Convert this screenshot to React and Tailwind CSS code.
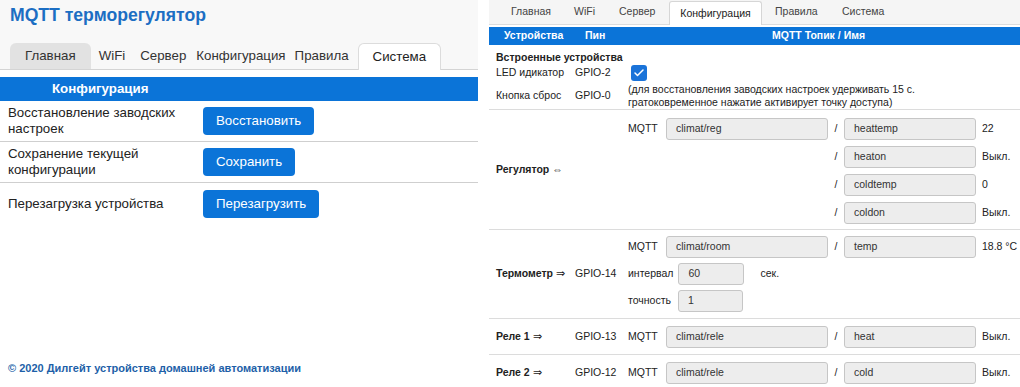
import { Check } from 'lucide-react';

const Field = ({ value, w }) => (
  <div className={`${w} h-[22px] shrink-0 bg-[#ededed] border border-[#c6c6c6] rounded-[3px] pl-[9px] flex items-center text-[#333]`}>
    {value}
  </div>
);

const TopicRow = ({ label, topic, name, value }) => (
  <div className="flex items-center h-[22px]">
    <span className="w-[38px] shrink-0">{label}</span>
    {topic ? <Field value={topic} w="w-[162px]" /> : <div className="w-[162px] shrink-0" />}
    <span className="w-[16px] shrink-0 text-center">/</span>
    <Field value={name} w="w-[132px]" />
    <span className="ml-[6px] whitespace-nowrap">{value}</span>
  </div>
);

const LeftRow = ({ label, action, last }) => (
  <div className={`flex items-center h-[41px] ${last ? '' : 'border-b border-[#cfcfcf]'}`}>
    <div className="w-[203px] pl-[8px] leading-[16px] text-[#222]">{label}</div>
    <button className="h-[28px] px-[13px] bg-[#0b74d8] text-white rounded-[4px]">{action}</button>
  </div>
);

const LeftPanel = () => (
  <div className="w-[478px] shrink-0 h-full flex flex-col text-[13.3px]">
    <div className="bg-[#f8f8f8] border-b border-[#d4d4d4]">
      <h1 className="h-[43px] pl-[10px] pt-[4px] text-[17.6px] leading-[22px] font-bold text-[#1c6ec3]">
        MQTT терморегулятор
      </h1>
      <div className="flex items-center h-[26px] pl-[10px] text-[#333]">
        <span className="h-[26px] px-[15px] flex items-center rounded-t-[6px] bg-[#e2e2e2]">Главная</span>
        <span className="ml-[8px]">WiFi</span>
        <span className="ml-[15px]">Сервер</span>
        <span className="ml-[10px]">Конфигурация</span>
        <span className="ml-[9px]">Правила</span>
        <span className="ml-[9px] h-[27px] -mb-px px-[14px] flex items-center bg-white border border-b-0 border-[#dcdcdc] rounded-t-[6px] text-[#222]">
          Система
        </span>
      </div>
    </div>
    <div className="mt-[7px] h-[24px] bg-[#0b74d8] text-white font-bold flex items-center pl-[52px]">
      Конфигурация
    </div>
    <LeftRow label={<>Восстановление заводских<br />настроек</>} action="Восстановить" />
    <LeftRow label={<>Сохранение текущей<br />конфигурации</>} action="Сохранить" />
    <LeftRow label="Перезагрузка устройства" action="Перезагрузить" last />
    <div className="mt-auto pl-[8px] pb-[11px] text-[11px] font-bold text-[#1d5fa8]">
      © 2020 Дилгейт устройства домашней автоматизации
    </div>
  </div>
);

const RightPanel = () => (
  <div className="flex-1 h-full text-[10.5px] text-[#222]">
    <div className="h-[25px] bg-[#f5f5f5] border-b border-[#dcdcdc] flex items-end text-[#444]">
      <span className="ml-[22px] w-[63px] h-[24px] flex items-center">Главная</span>
      <span className="w-[45px] h-[24px] flex items-center">WiFi</span>
      <span className="w-[50px] h-[24px] flex items-center">Сервер</span>
      <span className="w-[93px] h-[24px] -mb-px flex items-center justify-center bg-white border border-b-0 border-[#d6d6d6] rounded-t-[3px] text-[#222]">
        Конфигурация
      </span>
      <span className="w-[80px] h-[24px] pl-[13px] flex items-center">Правила</span>
      <span className="h-[24px] flex items-center">Система</span>
    </div>
    <div className="mt-[2px] h-[18px] bg-[#0b74d8] text-white font-bold flex items-center">
      <span className="pl-[15px] w-[96px]">Устройства</span>
      <span className="w-[187px]">Пин</span>
      <span>MQTT Топик / Имя</span>
    </div>

    <div className="h-[65px] pt-[5px] pl-[7px] border-b border-[#dcdcdc]">
      <div className="font-bold leading-[14px]">Встроенные устройства</div>
      <div className="flex items-center h-[18px]">
        <span className="w-[79px] shrink-0">LED идикатор</span>
        <span className="w-[53px] shrink-0">GPIO-2</span>
        <span className="ml-[3px] w-[16px] h-[16px] rounded-[3px] bg-[#1a73d9] flex items-center justify-center">
          <Check size={12} strokeWidth={3} color="white" />
        </span>
      </div>
      <div className="flex items-center h-[27px]">
        <span className="w-[79px] shrink-0">Кнопка сброс</span>
        <span className="w-[53px] shrink-0">GPIO-0</span>
        <div className="leading-[13px]">
          (для восстановления заводских настроек удерживать 15 с.<br />
          гратоковременное нажатие активирует точку доступа)
        </div>
      </div>
    </div>

    <div className="flex border-b border-[#dcdcdc]">
      <div className="w-[86px] shrink-0 pl-[7px] font-bold flex items-center">
        Регулятор <span className="ml-[3px] font-normal text-[#444]">⇔</span>
      </div>
      <div className="w-[53px] shrink-0" />
      <div className="flex flex-col gap-[6px] pt-[8px] pb-[5px]">
        <TopicRow label="MQTT" topic="climat/reg" name="heattemp" value="22" />
        <TopicRow name="heaton" value="Выкл." />
        <TopicRow name="coldtemp" value="0" />
        <TopicRow name="coldon" value="Выкл." />
      </div>
    </div>

    <div className="flex border-b border-[#dcdcdc]">
      <div className="w-[86px] shrink-0 pl-[7px] font-bold flex items-center">
        Термометр&nbsp;<span className="font-normal">⇒</span>
      </div>
      <div className="w-[53px] shrink-0 flex items-center">GPIO-14</div>
      <div className="flex flex-col gap-[5px] pt-[6px] pb-[6px]">
        <TopicRow label="MQTT" topic="climat/room" name="temp" value="18.8 °C" />
        <div className="flex items-center h-[22px]">
          <span>интервал</span>
          <span className="ml-[5px]"><Field value="60" w="w-[66px]" /></span>
          <span className="ml-[16px]">сек.</span>
        </div>
        <div className="flex items-center h-[22px]">
          <span>точность</span>
          <span className="ml-[7px]"><Field value="1" w="w-[65px]" /></span>
        </div>
      </div>
    </div>

    <div className="flex h-[36px] items-center border-b border-[#dcdcdc]">
      <div className="w-[86px] shrink-0 pl-[7px] font-bold">
        Реле 1&nbsp;<span className="font-normal">⇒</span>
      </div>
      <div className="w-[53px] shrink-0">GPIO-13</div>
      <TopicRow label="MQTT" topic="climat/rele" name="heat" value="Выкл." />
    </div>
    <div className="flex h-[36px] items-center">
      <div className="w-[86px] shrink-0 pl-[7px] font-bold">
        Реле 2&nbsp;<span className="font-normal">⇒</span>
      </div>
      <div className="w-[53px] shrink-0">GPIO-12</div>
      <TopicRow label="MQTT" topic="climat/rele" name="cold" value="Выкл." />
    </div>
  </div>
);

export default function App() {
  return (
    <div className="w-[1020px] h-[387px] overflow-hidden bg-white flex gap-[11px] font-['Liberation_Sans',Arial,sans-serif]">
      <LeftPanel />
      <RightPanel />
    </div>
  );
}
